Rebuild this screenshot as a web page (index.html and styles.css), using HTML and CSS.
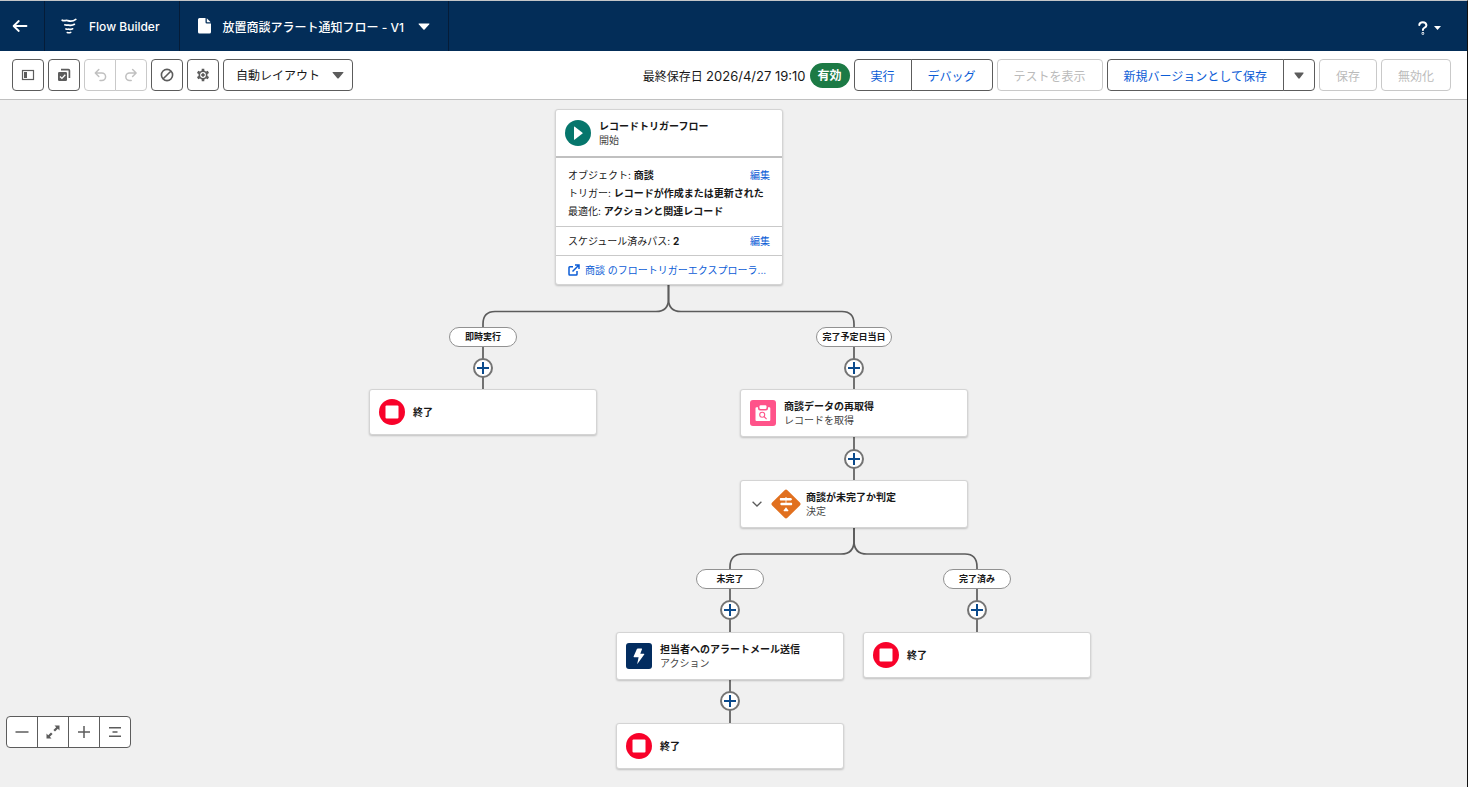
FILE: index.html
```html
<!DOCTYPE html>
<html lang="ja">
<head>
<meta charset="UTF-8" />
<meta name="viewport" content="width=device-width, initial-scale=1" />
<title>Flow Builder</title>
<link rel="stylesheet" href="styles.css">
</head>
<body>
  <header class="header">
    <button class="header-cell back" aria-label="戻る">
      <svg width="16" height="14" viewBox="0 0 16 14" fill="none" stroke="#fff" stroke-width="1.8" stroke-linecap="round" stroke-linejoin="round"><path d="M14.500 7H1.800M6.800 2L1.600 7l5.200 5"/></svg>
    </button>
    <div class="header-cell brand">
      <svg width="16" height="16" viewBox="0 0 16 16" fill="none" stroke="#fff" stroke-width="1.700" stroke-linecap="round"><path d="M1.200 2.200c1.800 1.200 3.400-.2 5.400.4s5.200 1 8.200-1.200M3.800 6.800c1.400.8 2.600 0 4 .3s3.600.5 5.600-.8M5 10.900c1.200.7 2.200.1 3.200.4s2.200.2 3.400-.5"/><path d="M6.200 14.500q1.800.7 3.600-.2" stroke-width="1.500"/></svg>
      <span>Flow Builder</span>
    </div>
    <button class="header-cell flow-name">
      <svg width="13" height="16" viewBox="0 0 13 16" fill="#fff"><path d="M1.500 0H7.500V4.200Q7.500 5.500 8.800 5.500H13V14Q13 15.500 11.500 15.500H1.500Q0 15.500 0 14V1.500Q0 0 1.500 0Z"/><path d="M8.800.3L12.700 4.200H8.800Z"/></svg>
      <span>放置商談アラート通知フロー - V1</span>
      <svg class="caret" width="12" height="7" viewBox="0 0 12 7" fill="#fff"><path d="M1 .5h10q.8 0 .3.700L6.600 6.500q-.6.6-1.200 0L.7 1.200Q.2.5 1 .5z"/></svg>
    </button>
    <button class="help" aria-label="ヘルプ">
      <svg width="10" height="14" viewBox="0 0 10 14" fill="none" stroke="#fff" stroke-width="2" stroke-linecap="round"><path d="M1.300 4Q1.500 1.300 4.800 1.300T8.400 4.200Q8.400 5.800 6.600 6.600T4.900 9"/><circle cx="4.900" cy="12.400" r=".4"/></svg>
      <svg width="7" height="4" viewBox="0 0 7 4" fill="#fff"><path d="M0 0h7L3.500 4z"/></svg>
    </button>
  </header>

  <div class="toolbar">
    <button class="btn icon-btn" aria-label="ツールボックスを切り替え">
      <svg width="14" height="12" viewBox="0 0 14 12"><rect x="1.500" y="1.500" width="11" height="9" fill="none" stroke="#5c5c5c" stroke-width="1.200"/><path fill="#5c5c5c" d="M3 3h3v6H3z"/></svg>
    </button>
    <button class="btn icon-btn" aria-label="要素を選択">
      <svg width="14" height="14" viewBox="0 0 14 14"><path d="M4 1.600h7.400q1 0 1 1V10" fill="none" stroke="#5c5c5c" stroke-width="1.700"/><rect x="1" y="4" width="9" height="9" rx="1.200" fill="#5c5c5c"/><path d="M3 8.500l1.900 1.900L8.300 6.700" fill="none" stroke="#fff" stroke-width="1.300"/></svg>
    </button>
    <div class="btn-group">
      <button class="btn icon-btn" disabled aria-label="元に戻す">
        <svg width="14" height="14" viewBox="0 0 14 14" fill="none" stroke="#c0c0c0" stroke-width="1.500" stroke-linecap="round" stroke-linejoin="round"><path d="M5.800 1.500L2.300 5l3.500 3.500M2.600 5h6.200a3.800 3.800 0 0 1 0 7.600H7"/></svg>
      </button>
      <button class="btn icon-btn" disabled aria-label="やり直し">
        <svg width="14" height="14" viewBox="0 0 14 14" fill="none" stroke="#c0c0c0" stroke-width="1.500" stroke-linecap="round" stroke-linejoin="round"><path d="M8.600 1.500L12.100 5 8.600 8.500M11.800 5H5.600a3.800 3.800 0 0 0 0 7.600h1.600"/></svg>
      </button>
    </div>
    <button class="btn icon-btn" aria-label="エラー">
      <svg width="14" height="14" viewBox="0 0 14 14" fill="none" stroke="#5c5c5c" stroke-width="1.600"><circle cx="7" cy="7" r="5.600"/><path d="M3.200 10.800l7.600-7.600"/></svg>
    </button>
    <button class="btn icon-btn" aria-label="設定">
      <svg width="14" height="14" viewBox="0 0 14 14" fill="none" stroke="#5c5c5c"><path stroke-width="2.600" d="M7 .8V3M7 11v2.200M1.600 3.900l2 1.100M10.400 9l2 1.100M1.600 10.100l2-1.100M10.400 5l2-1.100"/><circle cx="7" cy="7" r="3.700" stroke-width="1.600"/><circle cx="7" cy="7" r="1.300" fill="#5c5c5c"/></svg>
    </button>
    <div class="layout-select">
      <select class="btn" aria-label="レイアウト">
        <option>自動レイアウト</option>
        <option>自由形式</option>
      </select>
      <svg class="select-caret" width="12" height="7" viewBox="0 0 12 7" fill="#5c5c5c"><path d="M1 0h10q1 0 .3.800L6.700 6.300q-.7.6-1.400 0L.7.8Q0 0 1 0z"/></svg>
    </div>

    <div class="toolbar-right">
      <span class="saved">最終保存日 <time>2026/4/27 19:10</time></span>
      <span class="badge">有効</span>
      <div class="btn-group">
        <button class="btn">実行</button>
        <button class="btn">デバッグ</button>
      </div>
      <button class="btn" disabled>テストを表示</button>
      <div class="btn-group">
        <button class="btn">新規バージョンとして保存</button>
        <button class="btn icon-btn" aria-label="その他の保存オプション">
          <svg width="12" height="7" viewBox="0 0 12 7" fill="#5c5c5c"><path d="M2 .5h8q1.200 0 .4.900L6.800 6.300q-.8.7-1.600 0L1.600 1.400Q.8.5 2 .5z"/></svg>
        </button>
      </div>
      <button class="btn" disabled>保存</button>
      <button class="btn" disabled>無効化</button>
    </div>
  </div>

  <main class="canvas">
    <svg class="connectors" width="1100" height="680" fill="none" stroke="#5c5c5c" stroke-width="1.700">
      <path d="M668.500 185V199Q668.500 211.500 656 211.500H495Q483 211.500 483 224V290"/>
      <path d="M668.500 185V199Q668.500 211.500 681 211.500H842Q854 211.500 854 224V382"/>
      <path d="M854 427V441Q854 454 841 454H743Q730 454 730 467V624"/>
      <path d="M854 427V441Q854 454 867 454H965Q977 454 977 467V532"/>
    </svg>

    <section class="node start">
      <div class="node-head">
        <svg class="icon" viewBox="0 0 26 26"><circle cx="13" cy="13" r="13" fill="#06766c"/><path fill="#fff" d="M9 7.200q0-1 .8-.4l7.700 6q.5.400 0 .8l-7.700 6q-.8.600-.8-.4z"/></svg>
        <div>
          <div class="node-title">レコードトリガーフロー</div>
          <div class="node-sub">開始</div>
        </div>
      </div>
      <div class="start-section">
        <div class="start-row"><span>オブジェクト: <b>商談</b></span><a href="#">編集</a></div>
        <div class="start-row"><span>トリガー: <b>レコードが作成または更新された</b></span></div>
        <div class="start-row"><span>最適化: <b>アクションと関連レコード</b></span></div>
      </div>
      <div class="start-section single">
        <div class="start-row"><span>スケジュール済みパス: <b>2</b></span><a href="#">編集</a></div>
      </div>
      <div class="start-section single">
        <a class="explorer" href="#">
          <svg width="12" height="12" viewBox="0 0 12 12" fill="none" stroke="#0b5cd6" stroke-width="1.500"><path d="M5 2.800H1.800q-.8 0-.8.8v6.600q0 .8.800.8h6.400q.8 0 .8-.8V7M7 1h4v4M11 1L4.500 7.500"/></svg>
          <span>商談 のフロートリガーエクスプローラ...</span>
        </a>
      </div>
    </section>

    <span class="pill pill-now">即時実行</span>
    <button class="add add-now" aria-label="要素を追加"></button>
    <section class="node end end-now">
      <svg class="icon" viewBox="0 0 26 26"><circle cx="13" cy="13" r="13" fill="#f8022a"/><rect x="6.500" y="6.500" width="13" height="13" rx="1" fill="#fff"/></svg>
      <div class="node-title">終了</div>
    </section>

    <span class="pill pill-due">完了予定日当日</span>
    <button class="add add-due" aria-label="要素を追加"></button>
    <section class="node get">
      <svg class="icon" viewBox="0 0 26 26"><rect width="26" height="26" rx="3" fill="#ff538a"/><path fill="#fff" d="M6.500 7.200H8V8.500q0 2 2 2h6q2 0 2-2V7.200h1.300q1 0 1 1V20q0 1-1 1H6.500q-1 0-1-1V8.200q0-1 1-1z"/><rect x="9.500" y="5.300" width="7" height="3.700" rx="1.200" fill="#fff"/><g fill="none" stroke="#ff538a" stroke-width="1.100"><circle cx="12.200" cy="14.700" r="2.500"/><path d="M14 16.500l2.600 2.600"/></g></svg>
      <div>
        <div class="node-title">商談データの再取得</div>
        <div class="node-sub">レコードを取得</div>
      </div>
    </section>
    <button class="add add-get" aria-label="要素を追加"></button>

    <section class="node decision">
      <button class="toggle" aria-label="折りたたむ">
        <svg width="10" height="6" viewBox="0 0 10 6" fill="none" stroke="#5c5c5c" stroke-width="1.300"><path d="M.6.7L5 5l4.400-4.300"/></svg>
      </button>
      <svg class="icon-wide" viewBox="0 0 30 30"><rect x="4.200" y="4.200" width="21.600" height="21.600" rx="2" fill="#e1701f" transform="rotate(45 15 15)"/><path fill="#fff" d="M14.500 8h1v2h-1zM14.600 11h.8v3h-.8zM9.600 9h10.400l1.200 1.300-1.200 1.300H9.600q-.8 0-.8-1.300t.8-1.300zM10.200 13.700h10.200q.8 0 .8 1.300t-.8 1.300H10.200L9 15zM15 18.200l2.400 3.300q.2.700-.5.700h-3.800q-.7 0-.5-.7z"/></svg>
      <div>
        <div class="node-title">商談が未完了か判定</div>
        <div class="node-sub">決定</div>
      </div>
    </section>

    <span class="pill pill-open">未完了</span>
    <button class="add add-open" aria-label="要素を追加"></button>
    <section class="node action">
      <svg class="icon" viewBox="0 0 26 26"><rect width="26" height="26" rx="3" fill="#032d60"/><path fill="#fff" d="M11.800 5.500h3.700q.8 0 .5.700l-1.700 4.600h3.500q1 0 .4.800l-6.500 9q-.6.700-.4-.2l1.300-6.200H8.300q-1 0-.7-.8l3.300-7.300q.3-.6.900-.6z"/></svg>
      <div>
        <div class="node-title">担当者へのアラートメール送信</div>
        <div class="node-sub">アクション</div>
      </div>
    </section>
    <button class="add add-action" aria-label="要素を追加"></button>
    <section class="node end end-open">
      <svg class="icon" viewBox="0 0 26 26"><circle cx="13" cy="13" r="13" fill="#f8022a"/><rect x="6.500" y="6.500" width="13" height="13" rx="1" fill="#fff"/></svg>
      <div class="node-title">終了</div>
    </section>

    <span class="pill pill-done">完了済み</span>
    <button class="add add-done" aria-label="要素を追加"></button>
    <section class="node end end-done">
      <svg class="icon" viewBox="0 0 26 26"><circle cx="13" cy="13" r="13" fill="#f8022a"/><rect x="6.500" y="6.500" width="13" height="13" rx="1" fill="#fff"/></svg>
      <div class="node-title">終了</div>
    </section>

    <div class="btn-group zoom">
      <button class="btn icon-btn" aria-label="縮小">
        <svg width="14" height="14" viewBox="0 0 14 14" fill="none" stroke="#5c5c5c" stroke-width="1.500"><path d="M.5 7h13"/></svg>
      </button>
      <button class="btn icon-btn" aria-label="全体を表示">
        <svg width="14" height="14" viewBox="0 0 14 14" fill="#5c5c5c"><path d="M8.500.5h5v5L11.800 3.800 9 6.600 7.400 5l2.800-2.800zM5.500 13.500h-5v-5l1.700 1.700L5 7.400 6.600 9l-2.800 2.800z"/></svg>
      </button>
      <button class="btn icon-btn" aria-label="拡大">
        <svg width="14" height="14" viewBox="0 0 14 14" fill="none" stroke="#5c5c5c" stroke-width="1.500"><path d="M1 7h12M7 1v12"/></svg>
      </button>
      <button class="btn icon-btn" aria-label="中央に揃える">
        <svg width="14" height="14" viewBox="0 0 14 14" fill="none" stroke="#5c5c5c" stroke-width="1.500"><path d="M1 2.800h12M4.500 7h5M1 11.200h12"/></svg>
      </button>
    </div>
  </main>
</body>
</html>
```

FILE: styles.css
```css
* {
  box-sizing: border-box;
}
body {
  margin: 0;
  min-height: 100vh;
  display: flex;
  flex-direction: column;
  border-top: 1px solid #c4c6c8;
  border-right: 1px solid #111;
  font-family: Inter, "Noto Sans CJK JP", sans-serif;
  font-size: 12px;
  color: #181818;
}
button, select {
  font: inherit;
  margin: 0;
  cursor: pointer;
}
svg {
  display: block;
  flex: none;
}
a {
  color: #0b5cd6;
  text-decoration: none;
}

/* header */
.header {
  display: flex;
  height: 50px;
  background: #032d58;
}
.header-cell {
  display: flex;
  align-items: center;
  gap: 12px;
  padding: 0 19px 0 16px;
  background: none;
  border: 0;
  border-right: 1px solid #051c38;
  color: #fff;
  font-weight: 500;
  white-space: nowrap;
}
.back {
  width: 45px;
  padding: 0 12px;
}
.flow-name {
  padding: 0 18px;
}
.caret {
  margin-left: 2px;
}
.help {
  display: flex;
  align-items: center;
  gap: 6px;
  margin-left: auto;
  padding: 4px 26px 0 8px;
  background: none;
  border: 0;
}

/* toolbar */
.toolbar {
  display: flex;
  align-items: center;
  gap: 4px;
  padding: 8px 16px 8px 12px;
  background: #fff;
  border-bottom: 1px solid #c0c0c0;
}
.toolbar-right {
  display: flex;
  align-items: center;
  gap: 4px;
  margin-left: auto;
  white-space: nowrap;
}
.saved time {
  font-size: 13px;
}
.btn {
  height: 32px;
  padding: 0 16px;
  background: #fff;
  border: 1px solid #5c5c5c;
  border-radius: 4px;
  color: #0b5cd6;
  white-space: nowrap;
}
.btn:disabled {
  border-color: #c9c9c9;
  color: #bbb;
  cursor: default;
}
.icon-btn {
  display: flex;
  align-items: center;
  justify-content: center;
  width: 32px;
  padding: 0;
}
.btn-group {
  display: flex;
}
.btn-group .btn + .btn {
  margin-left: -1px;
  border-top-left-radius: 0;
  border-bottom-left-radius: 0;
}
.btn-group .btn:not(:last-child) {
  border-top-right-radius: 0;
  border-bottom-right-radius: 0;
}
.layout-select {
  position: relative;
}
.layout-select select {
  appearance: none;
  width: 130px;
  padding: 0 28px 0 12px;
  color: #181818;
}
.select-caret {
  position: absolute;
  right: 9px;
  top: 13px;
  pointer-events: none;
}
.badge {
  padding: 0 8px;
  border-radius: 13px;
  background: #1c7a45;
  color: #fff;
  font-weight: 700;
  line-height: 25px;
}

/* canvas */
.canvas {
  position: relative;
  flex: 1;
  min-height: 680px;
  background: #f0f0f0;
  font-size: 10px;
}
.connectors {
  position: absolute;
  left: 0;
  top: 0;
}
.node {
  position: absolute;
  display: flex;
  align-items: center;
  gap: 8px;
  width: 228px;
  height: 48px;
  padding: 0 9px;
  background: #fff;
  border: 1px solid #d4d4d4;
  border-radius: 3px;
  box-shadow: 0 1px 2px rgba(0,0,0,0.2);
}
.node.end {
  height: 46px;
}
.icon {
  width: 26px;
  height: 26px;
}
.icon-wide {
  width: 30px;
  height: 30px;
}
.node-title {
  font-weight: 700;
  line-height: 14px;
}
.node-sub {
  line-height: 14px;
  color: #444;
}
.node.decision {
  gap: 5px;
  padding: 0 11px;
}
.toggle {
  padding: 0;
  background: none;
  border: 0;
}
.toggle + .icon-wide {
  margin-left: 4px;
}

.node.start {
  display: block;
  height: auto;
  padding: 0;
}
.node-head {
  display: flex;
  align-items: center;
  gap: 8px;
  height: 46px;
  padding: 0 9px;
}
.start-section {
  padding: 6px 12px;
  border-top: 1px solid #c9c9c9;
}
.node-head + .start-section {
  padding-top: 8px;
  border-top: 2px solid #c0c0c0;
}
.start-section.single {
  padding: 5px 12px;
}
.start-row {
  display: flex;
  justify-content: space-between;
  line-height: 18px;
  white-space: nowrap;
}
.explorer {
  display: flex;
  align-items: center;
  gap: 5px;
  line-height: 18px;
  white-space: nowrap;
}

.pill {
  position: absolute;
  width: 68px;
  border: 1px solid #919191;
  border-radius: 10px;
  background: #fff;
  font-size: 9px;
  font-weight: 700;
  line-height: 18px;
  text-align: center;
  white-space: nowrap;
}
.add {
  position: absolute;
  width: 20px;
  height: 20px;
  padding: 0;
  border: 2px solid #747474;
  border-radius: 50%;
  background:
    linear-gradient(#0b4a8c, #0b4a8c) center / 12px 2px no-repeat,
    linear-gradient(#0b4a8c, #0b4a8c) center / 2px 12px no-repeat,
    #fff;
}

/* places on the canvas */
.start { left: 555px; top: 9px; }
.pill-now { left: 449px; top: 227px; }
.add-now { left: 473px; top: 258px; }
.end-now { left: 369px; top: 289px; }
.pill-due { left: 816px; top: 227px; width: 76px; }
.add-due { left: 844px; top: 258px; }
.get { left: 740px; top: 289px; }
.add-get { left: 844px; top: 349px; }
.decision { left: 740px; top: 380px; }
.pill-open { left: 696px; top: 469px; }
.add-open { left: 720px; top: 500px; }
.action { left: 616px; top: 532px; }
.add-action { left: 720px; top: 591px; }
.end-open { left: 616px; top: 623px; }
.pill-done { left: 943px; top: 469px; }
.add-done { left: 967px; top: 500px; }
.end-done { left: 863px; top: 532px; }

.zoom {
  position: absolute;
  left: 6px;
  bottom: 39px;
}
```
